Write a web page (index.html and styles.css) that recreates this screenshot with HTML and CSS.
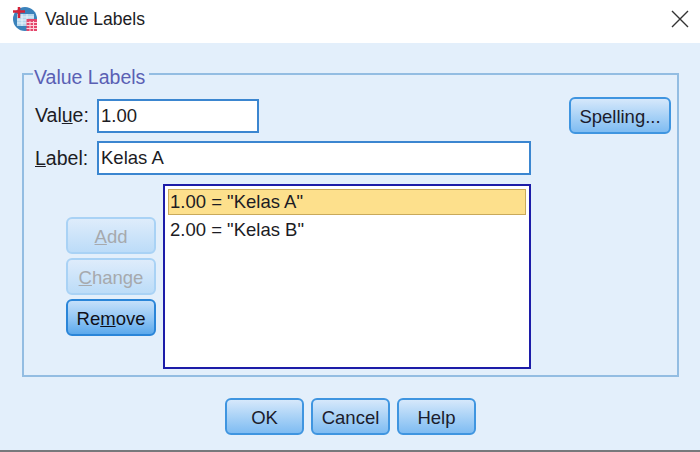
FILE: index.html
```html
<!DOCTYPE html>
<html lang="en">
<head>
  <meta charset="UTF-8">
  <title>Value Labels</title>
  <link rel="stylesheet" href="styles.css">
</head>
<body>
  <div class="titlebar">
    <svg class="app-icon" width="26" height="26" viewBox="0 0 26 26">
      <circle cx="13" cy="13" r="12" fill="#3a82bb"/>
      <path d="M5 8h17v12H5z" fill="#b5d6ec"/>
      <path d="M5 11h17M5 14h17M5 17h17M10 8v12M15 8v12" stroke="#e6f2fa" stroke-width="1" fill="none"/>
      <path d="M1 5.500h12M7 1v11" stroke="#d4243a" stroke-width="2.500" fill="none"/>
      <rect x="14.500" y="13" width="10.500" height="12" fill="#e4466b"/>
      <path d="M14.500 16.500h10.500M14.500 19.500h10.500M14.500 22.500h10.500M18 15v10M21.500 15v10" stroke="#fbd3dc" stroke-width="1" fill="none"/>
    </svg>
    <span class="title">Value Labels</span>
    <svg class="close" width="18" height="18" viewBox="0 0 18 18">
      <path d="M1 1l16 16M17 1L1 17" stroke="#333" stroke-width="1.400" fill="none"/>
    </svg>
  </div>

  <div class="content">
    <fieldset class="group">
      <legend>Value Labels</legend>

      <div class="row row-value">
        <label class="field-label">Val<u>u</u>e:</label>
        <input class="txt txt-value" type="text" value="1.00">
        <button class="btn btn-spelling">Spelling...</button>
      </div>

      <div class="row row-label">
        <label class="field-label"><u>L</u>abel:</label>
        <input class="txt txt-label" type="text" value="Kelas A">
      </div>

      <div class="row row-list">
        <div class="side-buttons">
          <button class="btn btn-side" disabled><u>A</u>dd</button>
          <button class="btn btn-side" disabled><u>C</u>hange</button>
          <button class="btn btn-side btn-focus">Re<u>m</u>ove</button>
        </div>
        <div class="listbox">
          <div class="item selected">1.00 = "Kelas A"</div>
          <div class="item">2.00 = "Kelas B"</div>
        </div>
      </div>
    </fieldset>

    <div class="footer">
      <button class="btn btn-foot">OK</button>
      <button class="btn btn-foot">Cancel</button>
      <button class="btn btn-foot">Help</button>
    </div>
  </div>
</body>
</html>
```

FILE: styles.css
```css
* {
  box-sizing: border-box;
}

html, body {
  height: 100%;
}

body {
  margin: 0;
  display: flex;
  flex-direction: column;
  border-bottom: 2px solid #77797c;
  background-color: #e3effb;
  color: #1c1c24;
  font-family: "Liberation Sans", Arial, sans-serif;
  font-size: 18.5px;
  overflow: hidden;
}

.titlebar {
  display: flex;
  align-items: center;
  flex: none;
  height: 43px;
  padding: 0 11px 5px 12px;
  background-color: white;
}

.app-icon {
  flex: none;
}

.title {
  margin-left: 7px;
  font-size: 17.5px;
}

.close {
  margin-left: auto;
}

.content {
  flex: 1;
  padding: 19px 21px 0 22px;
}

.group {
  height: 315px;
  margin: 0;
  padding: 11px 6px 0 9px;
  border: 2px solid #93bde2;
  border-radius: 0;
  min-width: 0;
}

.group legend {
  margin-left: 0;
  padding: 6px 4px 0 1px;
  color: #5a60b4;
  font-size: 19.5px;
  line-height: 18px;
}

.row {
  display: flex;
  align-items: center;
}

.row-value {
  height: 37px;
}

.row-label {
  height: 34px;
  margin-top: 7px;
}

.row-list {
  align-items: flex-end;
  margin-top: 9px;
}

.field-label {
  width: 64px;
  padding-left: 2px;
  font-size: 19.5px;
}

.txt {
  height: 34px;
  padding: 2px;
  border: 2px solid #3b86d0;
  border-radius: 0;
  background-color: white;
  color: #1c1c24;
  font-family: inherit;
  font-size: 18.5px;
  outline: none;
}

.txt-value {
  width: 162px;
}

.txt-label {
  width: 434px;
}

.btn {
  padding: 2px 0 0;
  border: 2px solid #3f95e0;
  border-radius: 6px;
  background: linear-gradient(#d6e8fb, #a5d0f6 55%, #7fbcf2);
  color: #1c1c2c;
  font-family: inherit;
  font-size: 18.5px;
}

.btn:disabled {
  border-color: #a9d2f5;
  background: linear-gradient(#deecfb, #bcdcf8);
  color: #a6a9ad;
}

.btn-focus {
  border-color: #2a85d8;
  background: linear-gradient(#c5e0fa, #8fc5f4 55%, #5ca9ec);
  color: #101018;
}

.btn-spelling {
  width: 102px;
  height: 37px;
  margin-left: auto;
}

.side-buttons {
  display: flex;
  flex-direction: column;
  gap: 4px;
  margin: 0 7px 33px 33px;
}

.btn-side {
  width: 90px;
  height: 37px;
}

.listbox {
  width: 368px;
  height: 185px;
  padding: 3px;
  border: 2px solid #1c1ca8;
  background-color: white;
}

.item {
  height: 30px;
  padding-left: 2px;
  line-height: 30px;
}

.item.selected {
  height: 26px;
  padding-left: 1px;
  border: 1px solid #c9a95a;
  background-color: #fde08c;
  line-height: 24px;
}

.footer {
  display: flex;
  justify-content: center;
  gap: 7px;
  padding-top: 21px;
}

.btn-foot {
  width: 79px;
  height: 37px;
}
```
